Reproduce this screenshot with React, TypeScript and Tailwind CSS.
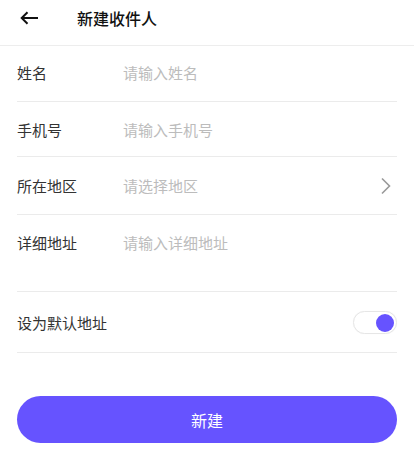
import React, { useState } from 'react';

const font = { fontFamily: '"Noto Sans CJK SC", "Noto Sans", sans-serif' };

function Row({ label, placeholder, className, arrow }: { label: string; placeholder: string; className: string; arrow?: boolean }) {
  return (
    <div className={`flex border-b border-[#ebebeb] ${className}`}>
      <span className="w-[106px] shrink-0 text-[15px] leading-[20px] text-[#333]">{label}</span>
      <input
        placeholder={placeholder}
        className="flex-1 bg-transparent p-0 text-[15px] leading-[20px] text-[#333] placeholder-[#bcbcbc] outline-none"
      />
      {arrow && (
        <svg width="12" height="18" viewBox="0 0 12 18" className="mr-[5px] text-[#999]" fill="none">
          <path d="M2 1.5L9.5 9L2 16.5" stroke="currentColor" strokeWidth="1.6" />
        </svg>
      )}
    </div>
  );
}

export default function App() {
  const [isDefault, setIsDefault] = useState(true);

  return (
    <div className="w-[414px] h-[450px] bg-white overflow-hidden" style={font}>
      {/* Header */}
      <div className="flex items-center h-[46px] border-b border-[#ededed]">
        <button className="ml-[19px] w-[20px] h-[20px] flex items-center justify-center -mt-[10px]">
          <svg width="19" height="14" viewBox="0 0 19 14" fill="none">
            <path d="M18 7H2M7.5 1.2L1.7 7l5.8 5.8" stroke="#111" strokeWidth="2" />
          </svg>
        </button>
        <h1 className="ml-[38px] -mt-[10px] text-[16px] font-medium text-[#111]">新建收件人</h1>
      </div>

      {/* Form */}
      <div className="px-[17px]">
        <Row label="姓名" placeholder="请输入姓名" className="items-center h-[56px] pb-[1px]" />
        <Row label="手机号" placeholder="请输入手机号" className="items-center h-[55px] pt-[2px]" />
        <Row label="所在地区" placeholder="请选择地区" className="items-center h-[58px] pt-[1px]" arrow />
        <Row label="详细地址" placeholder="请输入详细地址" className="items-start h-[77px] pt-[18px]" />

        <div className="flex items-center justify-between h-[60px] border-b border-[#ebebeb] mt-[1px]">
          <span className="text-[15px] leading-[20px] text-[#333]">设为默认地址</span>
          <button
            onClick={() => setIsDefault(!isDefault)}
            className="w-[44px] h-[23px] rounded-full border border-[#e6e6e6] bg-white flex items-center px-[2px] shadow-[0_0_1px_rgba(0,0,0,0.05)]"
          >
            <span className={`w-[18px] h-[18px] rounded-full bg-[#6653ff] ${isDefault ? 'ml-auto' : ''}`} />
          </button>
        </div>

        <button className="mt-[43px] w-full h-[47px] rounded-full bg-[#6653ff] text-white text-[16px]">新建</button>
      </div>
    </div>
  );
}
